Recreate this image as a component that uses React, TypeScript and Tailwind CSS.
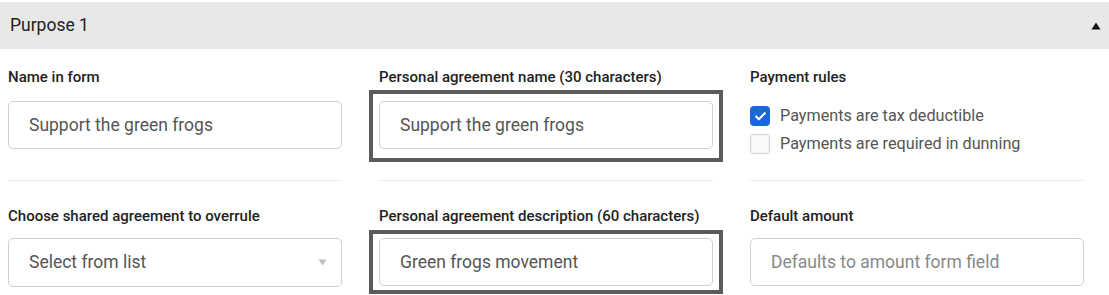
import { Check } from "lucide-react";

function Label({ children }: { children: string }) {
  return <div className="h-5 text-[15px] leading-5 font-medium text-[#222]">{children}</div>;
}

function TextBox({ value, placeholder, highlight }: { value?: string; placeholder?: string; highlight?: "top" | "bottom" }) {
  return (
    <div className="relative w-[334px]">
      {highlight === "top" && (
        <span className="pointer-events-none absolute -left-[10px] -right-[10px] -top-[11px] -bottom-[13px] border-4 border-[#5b5b5b]" />
      )}
      {highlight === "bottom" && (
        <span className="pointer-events-none absolute -left-[10px] -right-[10px] -top-[8px] -bottom-[8px] border-4 border-[#5b5b5b]" />
      )}
      <div className="flex h-[48px] items-center rounded-[5px] border border-[#cfcfcf] bg-white px-[20px] text-[17.5px]">
        {value ? <span className="text-[#555]">{value}</span> : <span className="text-[#888]">{placeholder}</span>}
      </div>
    </div>
  );
}

function Checkbox({ checked, label }: { checked?: boolean; label: string }) {
  return (
    <div className="flex h-[20px] items-center gap-[10px]">
      {checked ? (
        <span className="flex h-[20px] w-[20px] items-center justify-center rounded-[4px] bg-[#1a66dc]">
          <Check size={13} strokeWidth={4} color="white" />
        </span>
      ) : (
        <span className="h-[20px] w-[20px] rounded-[4px] border border-[#d0d0d0] bg-[#f9f9fa]" />
      )}
      <span className="text-[16.2px] text-[#555]">{label}</span>
    </div>
  );
}

function Divider() {
  return <div className="mt-[31px] h-px w-[334px] bg-[#ececec]" />;
}

export default function App() {
  return (
    <div className="h-[295px] w-[1109px] overflow-hidden bg-white pt-[2px]" style={{ fontFamily: "Roboto, 'Liberation Sans', sans-serif" }}>
      <div className="flex h-[47px] items-center justify-between bg-[#e8e8e8] pl-[10px] pr-[8px]">
        <span className="text-[17.5px] text-[#222]">Purpose 1</span>
        <svg width="10" height="8" viewBox="0 0 10 8" className="mt-[1px]">
          <path d="M5 0.5 L9.5 7.5 L0.5 7.5 Z" fill="#111" />
        </svg>
      </div>

      <div className="grid grid-cols-[371px_371px_367px] pl-2">
        {/* row 1 */}
        <div className="pt-[18px]">
          <Label>Name in form</Label>
          <div className="mt-[14px]">
            <TextBox value="Support the green frogs" />
          </div>
          <Divider />
        </div>
        <div className="pt-[18px]">
          <Label>Personal agreement name (30 characters)</Label>
          <div className="mt-[14px]">
            <TextBox value="Support the green frogs" highlight="top" />
          </div>
          <Divider />
        </div>
        <div className="pt-[18px]">
          <Label>Payment rules</Label>
          <div className="mt-[19px] flex flex-col gap-[8px]">
            <Checkbox checked label="Payments are tax deductible" />
            <Checkbox label="Payments are required in dunning" />
          </div>
          <div className="mt-[26px] h-px w-[334px] bg-[#ececec]" />
        </div>

        {/* row 2 */}
        <div className="pt-[25px]">
          <Label>Choose shared agreement to overrule</Label>
          <div className="relative mt-[12px] w-[334px]">
            <div className="flex h-[49px] items-center justify-between rounded-[5px] border border-[#cfcfcf] bg-white pl-[20px] pr-[14px] text-[17.5px] text-[#555]">
              <span>Select from list</span>
              <svg width="9" height="7" viewBox="0 0 9 7">
                <path d="M0.5 0.5 L8.5 0.5 L4.5 6.5 Z" fill="#bdbdbd" />
              </svg>
            </div>
          </div>
        </div>
        <div className="pt-[25px]">
          <Label>Personal agreement description (60 characters)</Label>
          <div className="mt-[12px]">
            <TextBox value="Green frogs movement" highlight="bottom" />
          </div>
        </div>
        <div className="pt-[25px]">
          <Label>Default amount</Label>
          <div className="mt-[12px]">
            <TextBox placeholder="Defaults to amount form field" />
          </div>
        </div>
      </div>
    </div>
  );
}
